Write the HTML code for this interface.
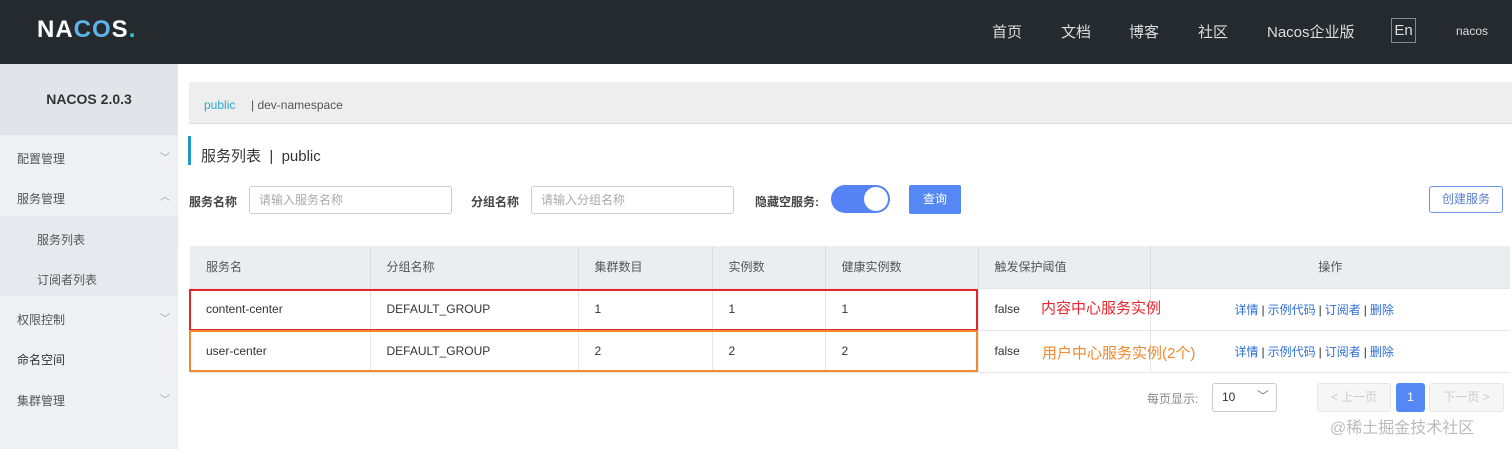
<!DOCTYPE html>
<html><head><meta charset="utf-8"><style>
*{box-sizing:border-box;margin:0;padding:0}
body{width:1512px;height:449px;overflow:hidden;background:#fff;font-family:"Liberation Sans","Noto Sans CJK SC",sans-serif;font-size:12px;color:#333;position:relative}
.a{position:absolute}
.hdr{left:0;top:0;width:1512px;height:64px;background:#252a2f}
.nav{top:21px;color:#ddd;font-size:15px}
.side{left:0;top:64px;width:178px;height:385px;background:#eef0f3}
.stop{left:0;top:64px;width:178px;height:71px;background:#e1e5ea;text-align:center;line-height:71px;font-weight:bold;font-size:14px;color:#333}
.mi{left:17px;font-size:12px;color:#555}
.chev{left:160px;font-size:10px;color:#999}
.inp{height:28px;border:1px solid #ccc;border-radius:3px;color:#aaa;padding-left:9px;line-height:26px;font-size:12px}
.lbl{font-weight:bold;color:#444;font-size:12px}
table{border-collapse:collapse;position:absolute;left:190px;top:246px;width:1320px}
td{height:42px;border-bottom:1px solid #e6e6e6;border-right:1px solid #e6e6e6;padding-left:16px;font-size:12px;color:#333}
thead td{background:#ebeef1;color:#555;border-right:1px solid #dcdcdc}
.lk{color:#2e6ed6}
.sep{margin:0 3px}
</style></head><body>
<div class="a hdr"></div>
<div class="a" style="left:37px;top:16px;font-size:24px;font-weight:bold;color:#fff;letter-spacing:1px">NA<span style="color:#5db4e8">CO</span>S<span style="color:#2ec7e0">.</span></div>
<div class="a nav" style="left:992px">首页</div>
<div class="a nav" style="left:1061px">文档</div>
<div class="a nav" style="left:1129px">博客</div>
<div class="a nav" style="left:1198px">社区</div>
<div class="a nav" style="left:1267px">Nacos企业版</div>
<div class="a" style="left:1391px;top:18px;width:25px;height:25px;border:1px solid #888;color:#ddd;font-size:15px;text-align:center;line-height:23px">En</div>
<div class="a" style="left:1456px;top:24px;color:#ddd;font-size:12px">nacos</div>
<div class="a side"></div>
<div class="a stop">NACOS 2.0.3</div>
<div class="a mi" style="top:150px">配置管理</div><div class="a chev" style="top:149px">﹀</div>
<div class="a mi" style="top:190px">服务管理</div><div class="a chev" style="top:188px">︿</div>
<div class="a" style="left:0;top:216px;width:178px;height:80px;background:#e6e9ed"></div>
<div class="a mi" style="left:37px;top:231px">服务列表</div>
<div class="a mi" style="left:37px;top:271px">订阅者列表</div>
<div class="a mi" style="top:311px">权限控制</div><div class="a chev" style="top:310px">﹀</div>
<div class="a mi" style="top:351px;color:#333">命名空间</div>
<div class="a mi" style="top:392px">集群管理</div><div class="a chev" style="top:391px">﹀</div>

<div class="a" style="left:189px;top:82px;width:1323px;height:42px;background:#eeeeee;border-bottom:1px solid #ddd"></div>
<div class="a" style="left:204px;top:98px;color:#29a8d0">public</div>
<div class="a" style="left:251px;top:98px;color:#555">| dev-namespace</div>
<div class="a" style="left:188px;top:136px;width:3px;height:29px;background:#209bc8"></div>
<div class="a" style="left:201px;top:145px;font-size:15px;color:#333">服务列表 &nbsp;| &nbsp;public</div>

<div class="a lbl" style="left:189px;top:193px">服务名称</div>
<div class="a inp" style="left:249px;top:186px;width:203px">请输入服务名称</div>
<div class="a lbl" style="left:471px;top:193px">分组名称</div>
<div class="a inp" style="left:531px;top:186px;width:203px">请输入分组名称</div>
<div class="a lbl" style="left:755px;top:193px">隐藏空服务:</div>
<div class="a" style="left:831px;top:185px;width:59px;height:28px;border-radius:14px;background:#5583f6"></div>
<div class="a" style="left:864px;top:187px;width:24px;height:24px;border-radius:12px;background:#fff"></div>
<div class="a" style="left:909px;top:185px;width:52px;height:29px;background:#5588f5;border-radius:2px;color:#fff;text-align:center;line-height:29px">查询</div>
<div class="a" style="left:1429px;top:186px;width:74px;height:27px;border:1px solid #6e94e8;border-radius:3px;color:#5b7fd0;text-align:center;line-height:25px">创建服务</div>

<table>
<colgroup><col style="width:180px"><col style="width:208px"><col style="width:134px"><col style="width:113px"><col style="width:153px"><col style="width:172px"><col></colgroup>
<thead><tr><td>服务名</td><td>分组名称</td><td>集群数目</td><td>实例数</td><td>健康实例数</td><td>触发保护阈值</td><td style="text-align:center;padding:0;border-right:0">操作</td></tr></thead>
<tr><td>content-center</td><td>DEFAULT_GROUP</td><td>1</td><td>1</td><td>1</td><td>false</td><td style="padding-left:84px;border-right:0"><span class="lk">详情</span><span class="sep">|</span><span class="lk">示例代码</span><span class="sep">|</span><span class="lk">订阅者</span><span class="sep">|</span><span class="lk">删除</span></td></tr>
<tr><td>user-center</td><td>DEFAULT_GROUP</td><td>2</td><td>2</td><td>2</td><td>false</td><td style="padding-left:84px;border-right:0"><span class="lk">详情</span><span class="sep">|</span><span class="lk">示例代码</span><span class="sep">|</span><span class="lk">订阅者</span><span class="sep">|</span><span class="lk">删除</span></td></tr>
</table>
<div class="a" style="left:189px;top:289px;width:789px;height:42px;border:2px solid #e0262e"></div>
<div class="a" style="left:189px;top:330px;width:789px;height:42px;border:2px solid #f08a2c"></div>
<div class="a" style="left:1041px;top:297px;color:#e8262e;font-size:15px">内容中心服务实例</div>
<div class="a" style="left:1042px;top:342px;color:#f08a2c;font-size:15px">用户中心服务实例(2个)</div>

<div class="a" style="left:1147px;top:390px;color:#888">每页显示:</div>
<div class="a" style="left:1212px;top:383px;width:65px;height:29px;border:1px solid #ccc;border-radius:3px;padding-left:9px;line-height:27px;color:#333">10<span style="position:absolute;left:44px;top:-1px;color:#777">﹀</span></div>
<div class="a" style="left:1317px;top:383px;width:74px;height:29px;border:1px solid #e6e6e6;background:#f6f6f6;border-radius:3px;color:#ccc;text-align:center;line-height:27px">&lt; 上一页</div>
<div class="a" style="left:1396px;top:383px;width:29px;height:29px;background:#5588f5;border-radius:3px;color:#fff;text-align:center;line-height:29px">1</div>
<div class="a" style="left:1429px;top:383px;width:75px;height:29px;border:1px solid #e6e6e6;background:#f6f6f6;border-radius:3px;color:#ccc;text-align:center;line-height:27px">下一页 &gt;</div>
<div class="a" style="left:1330px;top:414px;color:#bbb;font-size:16px">@稀土掘金技术社区</div>
</body></html>
